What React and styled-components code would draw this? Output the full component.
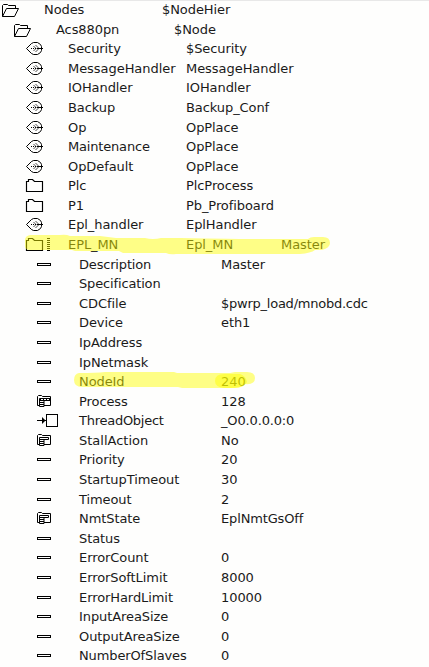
import React from "react";
import styled, { createGlobalStyle } from "styled-components";

const GlobalStyle = createGlobalStyle`
  body { margin: 0; background: #fefefd; }
`;

const Navigator = styled.main`
  width: 429px;
  height: 667px;
  overflow: hidden;
  box-sizing: border-box;
  background: #fefefd;
  box-shadow: inset 0 1px #e8e8e8;
  font: 13px/19px "DejaVu Sans", sans-serif;
  color: #1a1a1a;
`;

const Row = styled.div`
  position: relative;
  display: flex;
  align-items: flex-start;
  height: ${(p) => p.$height}px;
  padding-left: ${(p) => p.$indent}px;
  white-space: pre;
`;

const IconCell = styled.div`
  flex: 0 0 42px;
  height: 19px;
  svg { display: block; overflow: visible; }
`;

const Cell = styled.span`
  flex: 0 0 ${(p) => p.$width}px;
  letter-spacing: ${(p) => p.$spacing ?? -0.08}px;
`;

const Marker = styled.svg`
  position: absolute;
  left: 0;
  top: 0;
  overflow: visible;
  pointer-events: none;
`;

const line = { fill: "none", stroke: "#000", strokeWidth: 1 };

const icons = {
  open: (
    <g {...line}>
      <path d="M.5 16.5V5.5L1.5 4.5H5.5L6.5 5.5H13.5V8" />
      <path d="M.5 16.5L4.5 8.5H16.5L12.5 16.5Z" />
    </g>
  ),
  folder: <path {...line} strokeWidth="1.15" d="M.5 15.5V5.5H2.5V3.5H6.5L8.5 5.5H16.5V15.5Z" />,
  leaf: (
    <g {...line}>
      <path d="M.5 9.5L5.5 4.5L7.5 3.5H11.5L14.5 5.5L15.5 7.5V11.5L14.5 13.5L11.5 15.5H7.5L5.5 14.5Z" />
      <path d="M5 9.5H12" strokeDasharray="1 1" />
      <path d="M12 9.5H17" />
      <path d="M7.5 7L10 9.5L7.5 12M9.5 6L13 9.5L9.5 13" strokeWidth=".7" />
    </g>
  ),
  dash: <rect {...line} x=".5" y="8.5" width="13" height="2" />,
  list: (
    <g {...line}>
      <path d="M2 13.5H.5V4.5L1.5 3.5H4.5L5.5 4.5H13.5V13.5H7" />
      <path d="M2.5 14.5V6.5H11.5V8.5H2.5M2.5 10.5H7M2.5 12.5H7M2.5 14.5H7V8.5" />
    </g>
  ),
  table: (
    <g {...line}>
      <path d="M2 13.5H.5V4.5L1.5 3.5H4.5L5.5 4.5H13.5V13.5H7" />
      <path d="M2.5 14.5V6.5H13M2.5 8.5H13M2.5 10.5H7M2.5 12.5H7M2.5 14.5H7V8.5" />
      <path d="M3 7.5H13" strokeDasharray="1 2" />
    </g>
  ),
  thread: (
    <g {...line}>
      <path d="M0 9.5H9" />
      <path d="M5 6L8.5 9.5L5 13Z" fill="#000" stroke="none" />
      <rect x="9.5" y="3.5" width="11" height="12" />
    </g>
  ),
};

function Icon({ name, active }) {
  return (
    <IconCell>
      <svg width="24" height="19" aria-hidden="true">
        {icons[name]}
        {active && <path d="M22.5 3V16" stroke="#000" strokeWidth="3" strokeDasharray="1 1" />}
      </svg>
    </IconCell>
  );
}

// Column geometry for every depth of the tree.
const levels = [
  { indent: 2, name: 118 },
  { indent: 14, name: 118 },
  { indent: 26, name: 118 },
  { indent: 37, name: 142 },
];

const tracking = {
  "$pwrp_load/mnobd.cdc": -0.24,
  ThreadObject: -0.26,
  Description: -0.18,
  Specification: -0.15,
  Maintenance: -0.18,
  "_O0.0.0.0:0": -0.15,
  EplNmtGsOff: -0.15,
  StallAction: 0,
  NumberOfSlaves: -0.12,
  MessageHandler: -0.05,
};

const rows = [
  [0, "open", "Nodes", "$NodeHier"],
  [1, "open", "Acs880pn", "$Node"],
  [2, "leaf", "Security", "$Security"],
  [2, "leaf", "MessageHandler", "MessageHandler"],
  [2, "leaf", "IOHandler", "IOHandler"],
  [2, "leaf", "Backup", "Backup_Conf"],
  [2, "leaf", "Op", "OpPlace"],
  [2, "leaf", "Maintenance", "OpPlace"],
  [2, "leaf", "OpDefault", "OpPlace"],
  [2, "folder", "Plc", "PlcProcess"],
  [2, "folder", "P1", "Pb_Profiboard"],
  [2, "leaf", "Epl_handler", "EplHandler"],
  [2, "folder", "EPL_MN", "Epl_MN", "Master"],
  [3, "dash", "Description", "Master"],
  [3, "dash", "Specification", ""],
  [3, "dash", "CDCfile", "$pwrp_load/mnobd.cdc"],
  [3, "dash", "Device", "eth1"],
  [3, "dash", "IpAddress", ""],
  [3, "dash", "IpNetmask", ""],
  [3, "dash", "NodeId", "240"],
  [3, "table", "Process", "128"],
  [3, "thread", "ThreadObject", "_O0.0.0.0:0"],
  [3, "list", "StallAction", "No"],
  [3, "dash", "Priority", "20"],
  [3, "dash", "StartupTimeout", "30"],
  [3, "dash", "Timeout", "2"],
  [3, "list", "NmtState", "EplNmtGsOff"],
  [3, "dash", "Status", ""],
  [3, "dash", "ErrorCount", "0"],
  [3, "dash", "ErrorSoftLimit", "8000"],
  [3, "dash", "ErrorHardLimit", "10000"],
  [3, "dash", "InputAreaSize", "0"],
  [3, "dash", "OutputAreaSize", "0"],
  [3, "dash", "NumberOfSlaves", "0"],
];

const top = (i) => Math.round(i * 19.58 + 0.1);

const markers = {
  EPL_MN: (
    <path d="M30 0Q25 1 25 5V11Q25 15 30 15H72L75 16H119L123 18H166Q170 20 176 19H300Q311 18 315 15H322Q330 13 330 8Q330 2 323 2H314Q310 2 308 4H239Q187 3 181 3H161Q153 5 145 3H116L100 1H70Q66 -1 60 0Z" />
  ),
  NodeId: (
    <>
      <path d="M79 1Q74 2 74 8Q74 15 82 15H178L182 16H230Q242 16 245 12Q255 13 255 6Q255 0 247 0H235L230 1H177L174 0H105Q96 1 79 1Z" />
      <path d="M224 2Q215 2 215 9Q215 15 224 16H234Q244 16 247 10Q246 4 240 2Z" />
    </>
  ),
};

export default function App() {
  return (
    <>
      <GlobalStyle />
      <Navigator>
        {rows.map(([level, icon, name, value, note], i) => (
          <Row key={name} $indent={levels[level].indent} $height={top(i + 1) - top(i)}>
            <Icon name={icon} active={Boolean(note)} />
            <Cell $width={levels[level].name} $spacing={tracking[name]}>{name}</Cell>
            <Cell $width={note ? 95 : 150} $spacing={tracking[value]}>{value}</Cell>
            {note && <Cell $width={80}>{note}</Cell>}
            {markers[name] && (
              <Marker width="429" height="19" fill="#ff0" fillOpacity=".47">
                {markers[name]}
              </Marker>
            )}
          </Row>
        ))}
      </Navigator>
    </>
  );
}
